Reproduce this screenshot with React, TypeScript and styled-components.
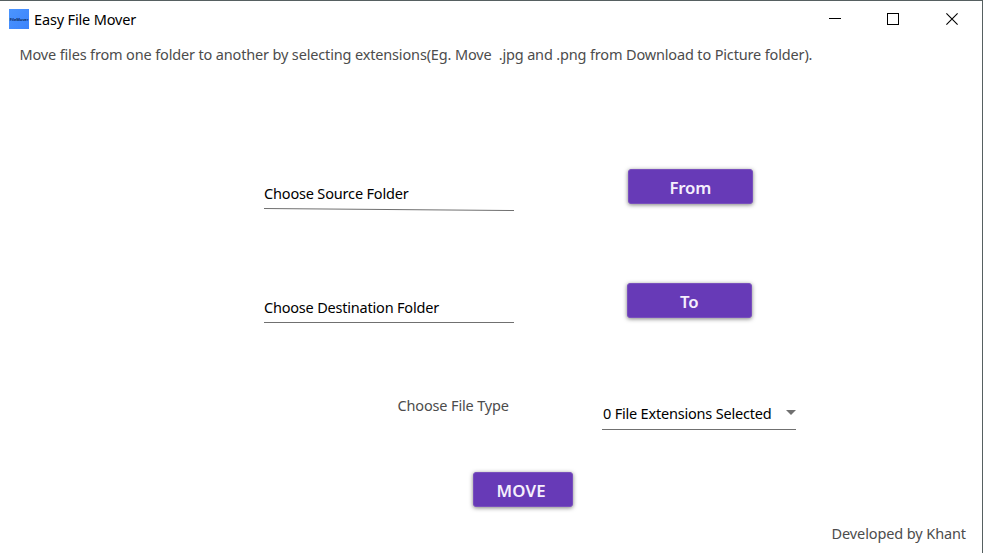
import React from "react";
import styled, { createGlobalStyle } from "styled-components";

const GlobalStyle = createGlobalStyle`
  * { box-sizing: border-box; }
  body { margin: 0; background: #fff; overflow: hidden; }
`;

const Window = styled.main`
  display: flex;
  flex-direction: column;
  width: 983px;
  height: 553px;
  border-top: 1px solid #566061;
  border-right: 1px solid #566061;
  background: #fff;
  font-family: "Noto Sans", "Open Sans", sans-serif;
  font-size: 14.5px;
  line-height: 20px;
  white-space: nowrap;
  color: #000;
`;

const TitleBar = styled.header`
  display: flex;
  align-items: center;
  height: 36px;
  padding-left: 9px;
`;

const AppIcon = styled.span`
  display: flex;
  align-items: center;
  justify-content: center;
  width: 20px;
  height: 20px;
  margin-right: 5px;
  background: linear-gradient(135deg, #4b95ff, #3c83fb);
  color: #0d2c60;
  font-size: 4px;
  font-weight: 700;
  line-height: 5px;
  letter-spacing: -0.1px;
`;

const Text = styled.span<{ $tracking?: number; $muted?: boolean }>`
  letter-spacing: ${(p) => p.$tracking ?? -0.2}px;
  color: ${(p) => (p.$muted ? "#4c4c4c" : "#000")};
`;

const Controls = styled.div`
  display: flex;
  margin-left: auto;
  padding-right: 1px;
`;

const ControlButton = styled.button`
  display: grid;
  place-items: center;
  width: 58.5px;
  height: 36px;
  padding: 0;
  border: 0;
  background: none;
`;

const Description = styled.p`
  margin: 7px 0 0 19.5px;
`;

const FolderRow = styled.section`
  display: flex;
  justify-content: space-between;
  align-items: flex-start;
  width: 488.5px;
  height: 34px;
  margin-left: 264px;
`;

const SourceRow = styled(FolderRow)`
  margin-top: 105px;
`;

const DestinationRow = styled(FolderRow)`
  width: 487.5px;
  margin-top: 80px;
`;

const Field = styled.div<{ $gap: number }>`
  display: flex;
  flex-direction: column;
  gap: ${(p) => p.$gap}px;
  width: 250px;
  padding-top: 14px;
`;

const Underline = styled.span<{ $slope?: number }>`
  height: 1px;
  background: #707070;
  transform: skewY(${(p) => p.$slope ?? 0}deg);
`;

const Button = styled.button<{ $width: number; $tracking?: number; $inset?: number }>`
  display: flex;
  align-items: center;
  justify-content: center;
  width: ${(p) => p.$width}px;
  height: 34.5px;
  padding: 3px ${(p) => p.$inset ?? 0}px 0 0;
  border: 1px solid #7950bd;
  border-radius: 3px;
  background: #673ab7;
  box-shadow: 0 1px 4px rgba(0, 0, 0, 0.5);
  color: #f5effc;
  font: 600 16.8px/22px "Noto Sans", sans-serif;
  letter-spacing: ${(p) => p.$tracking ?? -0.2}px;
`;

const TypeRow = styled.section`
  display: flex;
  justify-content: space-between;
  width: 398.5px;
  height: 34px;
  margin: 78px 0 0 397.5px;
`;

const Select = styled.div`
  display: flex;
  flex-direction: column;
  gap: 6px;
  width: 194px;
  padding-top: 7.5px;
`;

const SelectValue = styled.div`
  display: flex;
  align-items: center;
  justify-content: space-between;
  height: 20px;
  padding-left: 1px;
`;

const MoveRow = styled.section`
  margin: 43px 0 0 473px;
`;

const Footer = styled.footer`
  display: flex;
  justify-content: flex-end;
  margin-top: auto;
  padding: 0 16px 10px 0;
`;

export default function App() {
  return (
    <>
      <GlobalStyle />
      <Window>
        <TitleBar>
          <AppIcon>FileMover</AppIcon>
          <Text $tracking={-0.15}>Easy File Mover</Text>
          <Controls>
            <ControlButton aria-label="Minimize">
              <svg width="12" height="12" shapeRendering="crispEdges"><path d="M0 5.5H12" stroke="#000" /></svg>
            </ControlButton>
            <ControlButton aria-label="Maximize">
              <svg width="12" height="12" shapeRendering="crispEdges"><rect x=".5" y=".5" width="11" height="11" fill="none" stroke="#000" /></svg>
            </ControlButton>
            <ControlButton aria-label="Close">
              <svg width="12" height="12"><path d="M.4.4L11.6 11.6M11.6.4L.4 11.6" stroke="#000" strokeWidth="1.1" /></svg>
            </ControlButton>
          </Controls>
        </TitleBar>
        <Description>
          <Text $muted $tracking={-0.155}>
            Move files from one folder to another by selecting extensions(Eg. Move&nbsp; .jpg and .png from Download to Picture folder).
          </Text>
        </Description>
        <SourceRow>
          <Field $gap={6}>
            <Text $tracking={-0.17}>Choose Source Folder</Text>
            <Underline $slope={0.5} />
          </Field>
          <Button $width={124.5}>From</Button>
        </SourceRow>
        <DestinationRow>
          <Field $gap={5}>
            <Text>Choose Destination Folder</Text>
            <Underline />
          </Field>
          <Button $width={124.5}>To</Button>
        </DestinationRow>
        <TypeRow>
          <Text $muted $tracking={-0.15}>Choose File Type</Text>
          <Select>
            <SelectValue>
              <Text>0 File Extensions Selected</Text>
              <svg width="10" height="5"><path d="M0 0H10L5 5Z" fill="#707070" /></svg>
            </SelectValue>
            <Underline />
          </Select>
        </TypeRow>
        <MoveRow>
          <Button $width={99.5} $tracking={0.2} $inset={3}>MOVE</Button>
        </MoveRow>
        <Footer>
          <Text $muted $tracking={-0.11}>Developed by Khant</Text>
        </Footer>
      </Window>
    </>
  );
}
